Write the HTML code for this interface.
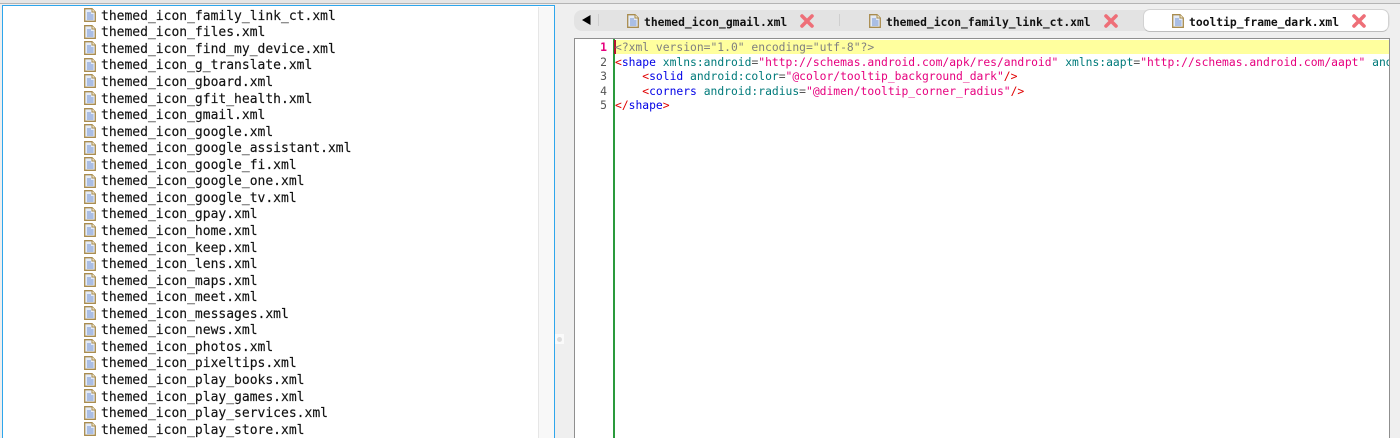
<!DOCTYPE html>
<html>
<head>
<meta charset="utf-8">
<style>
html,body{margin:0;padding:0;width:1400px;height:438px;overflow:hidden;background:#efefef;}
body{position:relative;font-family:"DejaVu Sans Mono","Liberation Mono",monospace;}
.abs{position:absolute;}
.row{position:absolute;left:101px;font-size:13px;line-height:16px;height:16px;color:#111;white-space:pre;-webkit-text-stroke:.15px #111;margin-top:1px;}
.ic{position:absolute;left:84px;width:12px;height:14px;}
.code{position:absolute;left:615px;font-size:11.34px;line-height:14px;height:14px;white-space:pre;color:#000;width:774px;overflow:hidden;}
.n{position:absolute;left:570px;width:37px;text-align:right;font-size:11.4px;line-height:14px;color:#555;}
.t{color:#e00000}.k{color:#0000e6}.a{color:#007a7a}.s{color:#e6007e}.e{color:#555}.g{color:#808080}
.tabt{position:absolute;top:15px;font-size:11.34px;line-height:14px;font-weight:bold;color:#111;white-space:pre;}
</style>
</head>
<body>
<svg width="0" height="0" style="position:absolute"><defs>
<symbol id="doc" viewBox="0 0 12 14">
<path d="M.7.7H8L11.3 4V13.3H.7Z" fill="#e4ebf7" stroke="#a98c4e" stroke-width="1.3"/>
<path d="M8 .7V4H11.3" fill="#f7efd8" stroke="#a98c4e"/>
<path d="M3 5H7M3 7H9.5M3 9H9.5M3 11H9.5" stroke="#6f90d0" stroke-width="1"/>
</symbol>
<symbol id="x" viewBox="0 0 14 14">
<path d="M2 2L12 12M12 2L2 12" stroke="#ee6f78" stroke-width="3.6" stroke-linecap="round"/>
</symbol>
</defs></svg>

<div class="abs" style="left:0;top:0;width:1400px;height:3px;background:#e6e6e6;border-bottom:1px solid #b4b4b4"></div>

<!-- left panel -->
<div class="abs" style="left:2px;top:5px;width:553px;height:433px;box-sizing:border-box;border:1px solid #2ea6ec;border-width:1.5px 1px 0 1.5px;background:#fff"></div>
<div class="abs" style="left:538px;top:7px;width:16px;height:431px;background:#f8f8f8;border-left:1px solid #e6e6e6;box-sizing:border-box"></div>

<!-- sash -->
<div class="abs" style="left:555px;top:334px;width:9px;height:10px;background:#fafafa"></div>
<div class="abs" style="left:557px;top:337px;width:5px;height:5px;border-radius:50%;background:#dcdcdc"></div>

<!-- left rows -->
<svg class="ic" style="top:8px"><use href="#doc"/></svg><div class="row" style="top:8px">themed_icon_family_link_ct.xml</div>
<svg class="ic" style="top:25px"><use href="#doc"/></svg><div class="row" style="top:24px">themed_icon_files.xml</div>
<svg class="ic" style="top:41px"><use href="#doc"/></svg><div class="row" style="top:41px">themed_icon_find_my_device.xml</div>
<svg class="ic" style="top:58px"><use href="#doc"/></svg><div class="row" style="top:57px">themed_icon_g_translate.xml</div>
<svg class="ic" style="top:74px"><use href="#doc"/></svg><div class="row" style="top:74px">themed_icon_gboard.xml</div>
<svg class="ic" style="top:91px"><use href="#doc"/></svg><div class="row" style="top:91px">themed_icon_gfit_health.xml</div>
<svg class="ic" style="top:108px"><use href="#doc"/></svg><div class="row" style="top:107px">themed_icon_gmail.xml</div>
<svg class="ic" style="top:124px"><use href="#doc"/></svg><div class="row" style="top:124px">themed_icon_google.xml</div>
<svg class="ic" style="top:141px"><use href="#doc"/></svg><div class="row" style="top:140px">themed_icon_google_assistant.xml</div>
<svg class="ic" style="top:157px"><use href="#doc"/></svg><div class="row" style="top:157px">themed_icon_google_fi.xml</div>
<svg class="ic" style="top:174px"><use href="#doc"/></svg><div class="row" style="top:173px">themed_icon_google_one.xml</div>
<svg class="ic" style="top:190px"><use href="#doc"/></svg><div class="row" style="top:190px">themed_icon_google_tv.xml</div>
<svg class="ic" style="top:207px"><use href="#doc"/></svg><div class="row" style="top:206px">themed_icon_gpay.xml</div>
<svg class="ic" style="top:223px"><use href="#doc"/></svg><div class="row" style="top:223px">themed_icon_home.xml</div>
<svg class="ic" style="top:240px"><use href="#doc"/></svg><div class="row" style="top:240px">themed_icon_keep.xml</div>
<svg class="ic" style="top:257px"><use href="#doc"/></svg><div class="row" style="top:256px">themed_icon_lens.xml</div>
<svg class="ic" style="top:273px"><use href="#doc"/></svg><div class="row" style="top:273px">themed_icon_maps.xml</div>
<svg class="ic" style="top:290px"><use href="#doc"/></svg><div class="row" style="top:289px">themed_icon_meet.xml</div>
<svg class="ic" style="top:306px"><use href="#doc"/></svg><div class="row" style="top:306px">themed_icon_messages.xml</div>
<svg class="ic" style="top:323px"><use href="#doc"/></svg><div class="row" style="top:322px">themed_icon_news.xml</div>
<svg class="ic" style="top:339px"><use href="#doc"/></svg><div class="row" style="top:339px">themed_icon_photos.xml</div>
<svg class="ic" style="top:356px"><use href="#doc"/></svg><div class="row" style="top:355px">themed_icon_pixeltips.xml</div>
<svg class="ic" style="top:373px"><use href="#doc"/></svg><div class="row" style="top:372px">themed_icon_play_books.xml</div>
<svg class="ic" style="top:389px"><use href="#doc"/></svg><div class="row" style="top:389px">themed_icon_play_games.xml</div>
<svg class="ic" style="top:406px"><use href="#doc"/></svg><div class="row" style="top:405px">themed_icon_play_services.xml</div>
<svg class="ic" style="top:422px"><use href="#doc"/></svg><div class="row" style="top:422px">themed_icon_play_store.xml</div>

<!-- tab bar -->
<div class="abs" style="left:574px;top:10px;width:816px;height:21px;background:#e3e3e3;border-radius:8px"></div>
<svg class="abs" style="left:581px;top:14px" width="10" height="12"><path d="M1 6L9.5 1V11Z" fill="#000"/></svg>
<div class="abs" style="left:598px;top:14px;width:1px;height:12px;background:#cfcfcf"></div>
<div class="abs" style="left:839px;top:14px;width:1px;height:12px;background:#cfcfcf"></div>
<svg class="abs" style="left:627px;top:14px" width="12" height="14"><use href="#doc"/></svg>
<div class="tabt" style="left:644px">themed_icon_gmail.xml</div>
<svg class="abs" style="left:800px;top:14px" width="14" height="14"><use href="#x"/></svg>
<svg class="abs" style="left:869px;top:14px" width="12" height="14"><use href="#doc"/></svg>
<div class="tabt" style="left:886px">themed_icon_family_link_ct.xml</div>
<svg class="abs" style="left:1104px;top:14px" width="14" height="14"><use href="#x"/></svg>
<div class="abs" style="left:1143px;top:9px;width:244px;height:21px;background:#fff;border:1px solid #d2d2d2;border-bottom:1px solid #bdbdbd;border-radius:7px"></div>
<svg class="abs" style="left:1172px;top:14px" width="12" height="14"><use href="#doc"/></svg>
<div class="tabt" style="left:1189px">tooltip_frame_dark.xml</div>
<svg class="abs" style="left:1352px;top:14px" width="14" height="14"><use href="#x"/></svg>

<!-- editor -->
<div class="abs" style="left:574px;top:38px;width:816px;height:400px;box-sizing:border-box;border:1px solid #8f8f8f;border-bottom:0;background:#fff"></div>
<div class="abs" style="left:615px;top:40px;width:774px;height:14px;background:#ffff9e"></div>
<div class="abs" style="left:613px;top:39px;width:2px;height:399px;background:#2a9a3c"></div>
<div class="abs" style="left:614px;top:40px;width:2px;height:14px;background:#b01030"></div>

<div class="n" style="top:40px;color:#e6007e;font-weight:bold">1</div>
<div class="n" style="top:55px">2</div>
<div class="n" style="top:69px">3</div>
<div class="n" style="top:84px">4</div>
<div class="n" style="top:98px">5</div>

<div class="code g" style="top:40px">&lt;?xml version="1.0" encoding="utf-8"?&gt;</div>
<div class="code" style="top:55px"><span class="t">&lt;</span><span class="k">shape</span> <span class="a">xmlns:android</span><span class="e">=</span><span class="s">"http://schemas.android.com/apk/res/android"</span> <span class="a">xmlns:aapt</span><span class="e">=</span><span class="s">"http://schemas.android.com/aapt"</span> <span class="a">android:width="</span></div>
<div class="code" style="top:69px">    <span class="t">&lt;</span><span class="k">solid</span> <span class="a">android:color</span><span class="e">=</span><span class="s">"@color/tooltip_background_dark"</span><span class="t">/&gt;</span></div>
<div class="code" style="top:84px">    <span class="t">&lt;</span><span class="k">corners</span> <span class="a">android:radius</span><span class="e">=</span><span class="s">"@dimen/tooltip_corner_radius"</span><span class="t">/&gt;</span></div>
<div class="code" style="top:98px"><span class="t">&lt;/</span><span class="k">shape</span><span class="t">&gt;</span></div>
</body>
</html>
